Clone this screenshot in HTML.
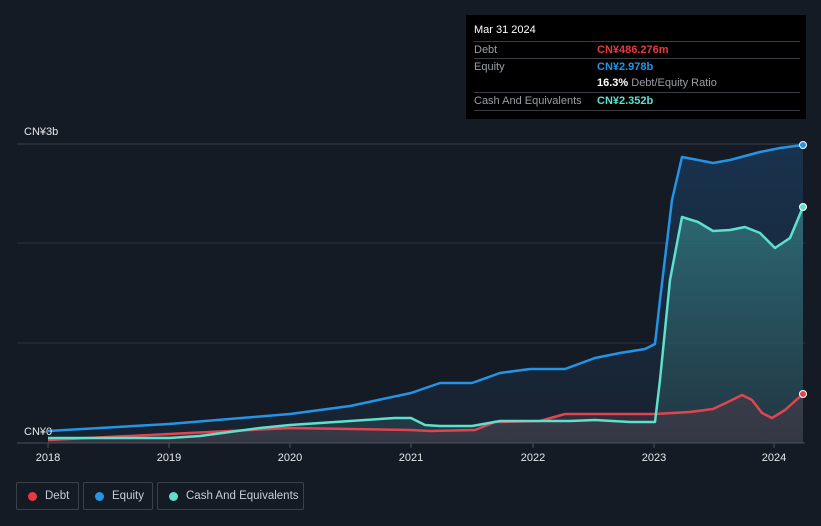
<!DOCTYPE html><html><head><style>
body{margin:0;background:#151b25;font-family:"Liberation Sans",sans-serif;}
.wrap{position:relative;width:821px;height:526px;overflow:hidden;}
.tt{position:absolute;left:466px;top:15px;width:340px;height:104px;background:#000;color:#fff;font-size:11px;}
.tt .r{position:absolute;left:8px;right:6px;border-top:1px solid #3a3d42;height:16px;line-height:16px;}
.tt .l{color:#9a9ea5;position:absolute;left:0}
.tt .v{position:absolute;left:123px;font-weight:bold}
.lg{position:absolute;top:482px;height:28px;border:1px solid #3a404a;border-radius:2px;color:#c8ccd2;font-size:11.5px;line-height:27px;box-sizing:border-box;white-space:nowrap}
.lg i{position:absolute;left:11px;top:9px;width:9px;height:9px;border-radius:50%}
</style></head><body><div class="wrap">
<svg width="821" height="526" style="position:absolute;left:0;top:0">
<defs>
<linearGradient id="ge" x1="0" y1="0" x2="0" y2="1"><stop offset="0" stop-color="#1a3a5c" stop-opacity=".75"/><stop offset="1" stop-color="#1a2a3c" stop-opacity=".5"/></linearGradient>
<linearGradient id="gc" x1="0" y1="0" x2="0" y2="1"><stop offset="0" stop-color="#3a9090" stop-opacity=".6"/><stop offset="1" stop-color="#2a4a55" stop-opacity=".5"/></linearGradient>
</defs>
<line x1="17" y1="144" x2="805" y2="144" stroke="#3a404a"/>
<line x1="17" y1="243" x2="805" y2="243" stroke="#2a303a"/>
<line x1="17" y1="343" x2="805" y2="343" stroke="#2a303a"/>
<path d="M48,431 L169,424 L290,414 L350,406 L411,393 L440,383 L472,383 L500,373 L530,369 L565,369 L595,358 L620,353 L645,349 L655,344 L660,300 L672,200 L682,157 L698,160 L713,163 L730,160 L760,152 L780,148 L803,145 L803,443 L48,443Z" fill="url(#ge)"/>
<path d="M48,438 L169,438 L200,436 L260,428 L290,425 L350,421 L395,418 L411,418 L425,425 L440,426 L472,426 L500,421 L530,421 L570,421 L595,420 L630,422 L655,422 L660,380 L670,280 L682,217 L698,222 L713,231 L730,230 L745,227 L760,233 L775,248 L790,238 L803,207 L803,443 L48,443Z" fill="url(#gc)"/>
<path d="M48,440 L169,434 L290,428 L411,430 L430,431 L475,430 L495,422 L540,421 L565,414 L600,414 L655,414 L690,412 L713,409 L730,401 L742,395 L752,400 L762,413 L772,418 L785,410 L803,394 L803,443 L48,443Z" fill="#4a3a45" fill-opacity=".5"/>
<path d="M48,431 L169,424 L290,414 L350,406 L411,393 L440,383 L472,383 L500,373 L530,369 L565,369 L595,358 L620,353 L645,349 L655,344 L660,300 L672,200 L682,157 L698,160 L713,163 L730,160 L760,152 L780,148 L803,145" fill="none" stroke="#2394e6" stroke-width="2.5" stroke-linejoin="round"/>
<path d="M48,440 L169,434 L290,428 L411,430 L430,431 L475,430 L495,422 L540,421 L565,414 L600,414 L655,414 L690,412 L713,409 L730,401 L742,395 L752,400 L762,413 L772,418 L785,410 L803,394" fill="none" stroke="#e0454f" stroke-width="2.5" stroke-linejoin="round"/>
<path d="M48,438 L169,438 L200,436 L260,428 L290,425 L350,421 L395,418 L411,418 L425,425 L440,426 L472,426 L500,421 L530,421 L570,421 L595,420 L630,422 L655,422 L660,380 L670,280 L682,217 L698,222 L713,231 L730,230 L745,227 L760,233 L775,248 L790,238 L803,207" fill="none" stroke="#5ee0cc" stroke-width="2.5" stroke-linejoin="round"/>
<line x1="17" y1="443" x2="805" y2="443" stroke="#4a505a"/>
<g stroke="#4a505a"><line x1="48" y1="443" x2="48" y2="448"/><line x1="169" y1="443" x2="169" y2="448"/><line x1="290" y1="443" x2="290" y2="448"/><line x1="411" y1="443" x2="411" y2="448"/><line x1="533" y1="443" x2="533" y2="448"/><line x1="654" y1="443" x2="654" y2="448"/><line x1="774" y1="443" x2="774" y2="448"/></g>
<circle cx="803" cy="145" r="3.5" fill="#2394e6" stroke="#fff" stroke-width="1"/>
<circle cx="803" cy="207" r="3.5" fill="#5ee0cc" stroke="#fff" stroke-width="1"/>
<circle cx="803" cy="394" r="3.5" fill="#e0454f" stroke="#fff" stroke-width="1"/>
<g fill="#e6e8ea" font-size="11" font-family="Liberation Sans,sans-serif">
<text x="24" y="135">CN¥3b</text><text x="24" y="435">CN¥0</text>
<g text-anchor="middle"><text x="48" y="461">2018</text><text x="169" y="461">2019</text><text x="290" y="461">2020</text><text x="411" y="461">2021</text><text x="533" y="461">2022</text><text x="654" y="461">2023</text><text x="774" y="461">2024</text></g></g>
</svg>
<div class="tt">
<div style="position:absolute;left:8px;top:9px;font-size:11px">Mar 31 2024</div>
<div class="r" style="top:26px"><span class="l">Debt</span><span class="v" style="color:#e8393f">CN¥486.276m</span></div>
<div class="r" style="top:43px"><span class="l">Equity</span><span class="v" style="color:#2394e6">CN¥2.978b</span></div>
<div class="r" style="top:60px;border-top:none"><span class="v" style="color:#fff">16.3% <span style="color:#9a9ea5;font-weight:normal">Debt/Equity Ratio</span></span></div>
<div class="r" style="top:77px"><span class="l">Cash And Equivalents</span><span class="v" style="color:#5ee0cc">CN¥2.352b</span></div>
<div class="r" style="top:95px;height:0"></div>
</div>
<div class="lg" style="left:16px;width:63px"><i style="background:#e8393f"></i><span style="position:absolute;left:28px">Debt</span></div>
<div class="lg" style="left:83px;width:70px"><i style="background:#2394e6"></i><span style="position:absolute;left:28px">Equity</span></div>
<div class="lg" style="left:157px;width:147px"><i style="background:#5ee0cc"></i><span style="position:absolute;left:28px">Cash And Equivalents</span></div>
</div></body></html>
